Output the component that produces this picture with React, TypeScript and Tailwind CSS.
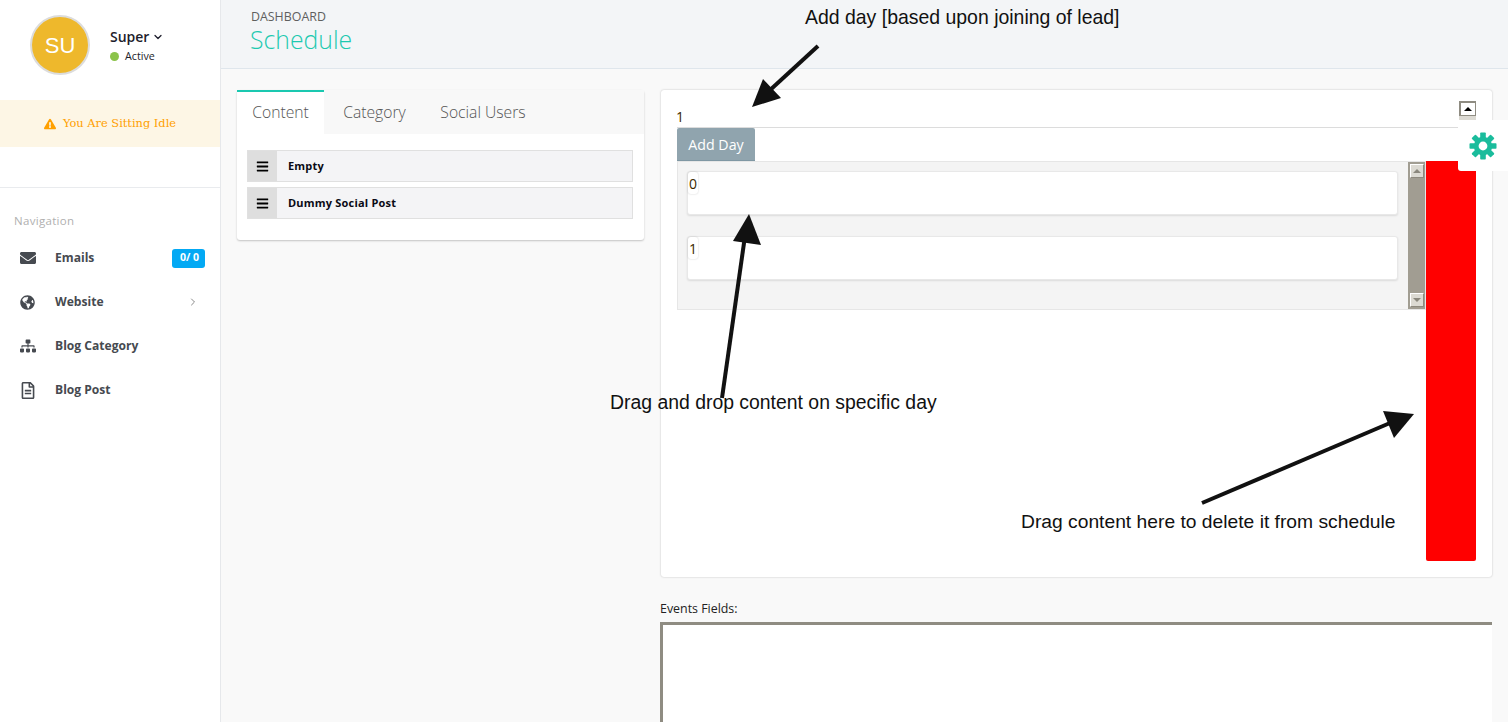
import { FaBars, FaEnvelope, FaExclamationTriangle, FaGlobeAmericas, FaRegFileAlt, FaSitemap } from "react-icons/fa";
import { ChevronDown, ChevronRight } from "lucide-react";
import type { ReactNode } from "react";

const navItems: { label: string; icon: ReactNode; extra?: ReactNode }[] = [
  {
    label: "Emails",
    icon: <FaEnvelope className="h-4 w-4" />,
    extra: (
      <span className="flex h-[19px] w-[33px] items-center justify-center rounded-[3px] bg-[#03a9f4] pl-[2px] text-[10.5px] font-bold text-white">
        0/ 0
      </span>
    ),
  },
  {
    label: "Website",
    icon: <FaGlobeAmericas className="h-[15px] w-[15px]" />,
    extra: <ChevronRight className="mr-[6px] h-3 w-3 text-[#8a8a8a]" />,
  },
  { label: "Blog Category", icon: <FaSitemap className="h-4 w-4" /> },
  { label: "Blog Post", icon: <FaRegFileAlt className="h-[17px] w-4" /> },
];

function Sidebar() {
  return (
    <aside className="flex w-[221px] shrink-0 flex-col border-r border-[#e6e8eb] bg-white">
      <div className="flex h-[100px] items-start pl-[30px] pt-[15px]">
        <div className="flex h-[60px] w-[60px] items-center justify-center rounded-full border-2 border-[#dcdcdc] bg-[#eeb82c] font-['Liberation_Sans',sans-serif] text-[22px] text-white">
          SU
        </div>
        <div className="ml-5 pt-[12px]">
          <div className="flex items-center gap-[3px] text-sm font-semibold leading-5 text-[#1d1d2b]">
            Super <ChevronDown className="h-3 w-3" strokeWidth={2.5} />
          </div>
          <div className="mt-[1px] flex items-center gap-1.5 text-[10.7px] leading-4 text-[#1d1d2b]">
            <span className="h-[9px] w-[9px] rounded-full bg-[#8bc34a]" />
            Active
          </div>
        </div>
      </div>
      <div className="flex h-[47px] items-center justify-center gap-[7px] bg-[#fdf6e5] font-['DejaVu_Serif',serif] text-[11.4px] text-[#ffa000]">
        <FaExclamationTriangle className="h-3 w-3" />
        You Are Sitting Idle
      </div>
      <div className="mt-10 border-t border-[#e9ebee] px-[14px] pt-[25px] text-[11.5px] leading-4 tracking-[0.3px] text-[#b0b0b0]">
        Navigation
      </div>
      <nav className="mt-[7px] flex flex-col">
        {navItems.map((item) => (
          <div key={item.label} className="flex h-11 items-center pl-5 pr-[15px] text-[#464a50]">
            <span className="flex w-[35px] shrink-0">{item.icon}</span>
            <span className="flex-1 text-[12.1px] font-bold">{item.label}</span>
            {item.extra}
          </div>
        ))}
      </nav>
    </aside>
  );
}

function ContentCard() {
  return (
    <div className="w-[407px] shrink-0 self-start rounded-[3px] bg-white shadow-[0_1px_2px_rgba(0,0,0,0.22)]">
      <div className="flex h-[44px] bg-[#f8f8f8] text-[15.7px] font-light text-[#555]">
        <div className="flex w-[87px] items-center justify-center border-t-2 border-[#1ac8b0] bg-white pb-px">Content</div>
        <div className="flex w-[99px] items-center justify-center pl-[2px] pt-px">Category</div>
        <div className="flex w-[120px] items-center justify-center pt-px">Social Users</div>
      </div>
      <div className="flex flex-col gap-[5px] pb-[21px] pl-[10px] pr-[11px] pt-4">
        {["Empty", "Dummy Social Post"].map((label) => (
          <div key={label} className="flex h-[32px] items-stretch border border-[#e0e0e0] bg-[#f4f4f6]">
            <span className="flex w-[29px] items-center justify-center bg-[#dedede] text-black">
              <FaBars className="h-[13px] w-[13px]" />
            </span>
            <span className="flex items-center pl-[11px] text-[11px] font-bold tracking-[0.2px] text-[#0a0a14]">{label}</span>
          </div>
        ))}
      </div>
    </div>
  );
}

function ScrollButton({ down }: { down?: boolean }) {
  return (
    <span className="flex h-[14px] w-[14px] items-center justify-center border border-t-white border-l-white border-r-[#8d897e] border-b-[#8d897e] bg-[#dcdad3]">
      <span
        className={`h-0 w-0 border-x-[4px] border-x-transparent ${
          down ? "border-t-[4px] border-t-[#8a877d]" : "border-b-[4px] border-b-[#8a877d]"
        }`}
      />
    </span>
  );
}

function GearIcon() {
  // chunky 8 tooth cog, the icon font version has a smaller hole than the packaged ones
  return (
    <svg width="28" height="28" viewBox="0 0 28 28" fill="currentColor">
      {[0, 45, 90, 135, 180, 225, 270, 315].map((angle) => (
        <rect key={angle} x="11.2" y="0.5" width="5.6" height="8" rx="0.8" transform={`rotate(${angle} 14 14)`} />
      ))}
      <circle cx="14" cy="14" r="9.2" />
      <circle cx="14" cy="14" r="4.4" fill="#fff" />
    </svg>
  );
}

function SchedulePanel() {
  return (
    <div className="relative h-[487px] rounded-[3px] bg-white px-4 shadow-[0_0_2px_rgba(0,0,0,0.25)]">
      <div className="flex h-[38px] items-end border-b border-[#dcdcdc] text-sm leading-5 text-[#3a2a00]">
        <span className="-ml-px">1</span>
      </div>
      {/* stray native scrollbar arrow, half hidden by the settings tab */}
      <span className="absolute left-[798px] top-[11px] flex flex-col">
        <span className="flex h-[15px] w-[17px] items-center justify-center border-2 border-r border-b border-[#8f8c82] bg-white">
          <span className="h-0 w-0 border-x-[4px] border-b-[4px] border-x-transparent border-b-black" />
        </span>
        <span className="h-[4px] w-[17px] bg-[#dcdad3]" />
      </span>
      <button
        type="button"
        className="flex h-[33px] w-[78px] items-center justify-center rounded-t-[2px] border-b border-[#7f97a3] bg-[#90a4ae] pt-px text-[14.2px] text-white"
      >
        Add Day
      </button>
      <div className="flex">
        <div className="flex h-[149px] w-[749px] border border-[#e6e6e6] bg-[#f4f4f4]">
          <div className="flex flex-1 flex-col gap-[21px] pl-[9px] pr-[10px] pt-[9px]">
            {["0", "1"].map((day) => (
              <div key={day} className="h-[44px] rounded-[3px] border border-[#e8e8e8] bg-white shadow-[0_1px_2px_rgba(0,0,0,0.1)]">
                <span className="block h-[22px] w-[10px] rounded-[3px] pl-px text-sm leading-6 text-[#3a2a00] shadow-[0_0_2px_rgba(0,0,0,0.2)]">
                  {day}
                </span>
              </div>
            ))}
          </div>
          <div className="flex w-[17px] shrink-0 flex-col justify-between bg-[#a19d92] py-[2px] pl-[2px]">
            <ScrollButton />
            <ScrollButton down />
          </div>
        </div>
        <div className="h-[400px] w-[50px] rounded-b-[2px] bg-[#ff0000]" />
      </div>
    </div>
  );
}

function Annotations() {
  const note = "absolute whitespace-nowrap font-['Liberation_Sans',sans-serif] leading-[22px] text-[#111]";
  return (
    <>
      <span className={`${note} left-[805px] top-[6px] text-[19.45px]`}>Add day [based upon joining of lead]</span>
      <span className={`${note} left-[610px] top-[391px] text-[19.4px]`}>Drag and drop content on specific day</span>
      <span className={`${note} left-[1021px] top-[511px] text-[19.25px]`}>Drag content here to delete it from schedule</span>
      <svg className="pointer-events-none absolute left-0 top-0" width="1508" height="722" fill="#111" stroke="none">
        <path d="M818 46 L769 91" stroke="#111" strokeWidth="4" />
        <path d="M752 107 L763 79 L781 98 Z" />
        <path d="M722 398 L745 236" stroke="#111" strokeWidth="4" />
        <path d="M749 214 L761 245 L733 241 Z" />
        <path d="M1202 503 L1390 423" stroke="#111" strokeWidth="4" />
        <path d="M1414 414 L1394 438 L1383 411 Z" />
      </svg>
    </>
  );
}

export default function App() {
  return (
    <div className="relative flex h-[722px] w-[1508px] overflow-hidden bg-[#f9f9f9] font-['Open_Sans',sans-serif]">
      <Sidebar />
      <main className="flex min-w-0 flex-1 flex-col">
        <header className="h-[69px] shrink-0 border-b border-[#dfe6ec] bg-[#f3f5f7] pl-[30px] pt-[9px]">
          <div className="text-[12.4px] leading-[15px] text-[#5f5f5f]">DASHBOARD</div>
          <h1 className="-ml-px -mt-px text-[24.8px] font-light leading-[32px] text-[#1dc9b0]">Schedule</h1>
        </header>
        <div className="flex gap-[17px] px-4 pt-[21px]">
          <ContentCard />
          <div className="min-w-0 flex-1">
            <SchedulePanel />
            <div className="-ml-px mt-[23px] text-[12.4px] leading-[18px] text-[#222]">Events Fields:</div>
            <div className="-ml-px mt-[4px] h-[200px] border-[3px] border-r-0 border-[#8f8c82] bg-white" />
          </div>
        </div>
      </main>
      <div className="absolute left-[1458px] top-[120px] flex h-[51px] w-[50px] items-center justify-center rounded-bl-[3px] bg-white text-[#1abc9c]">
        <GearIcon />
      </div>
      <Annotations />
    </div>
  );
}
